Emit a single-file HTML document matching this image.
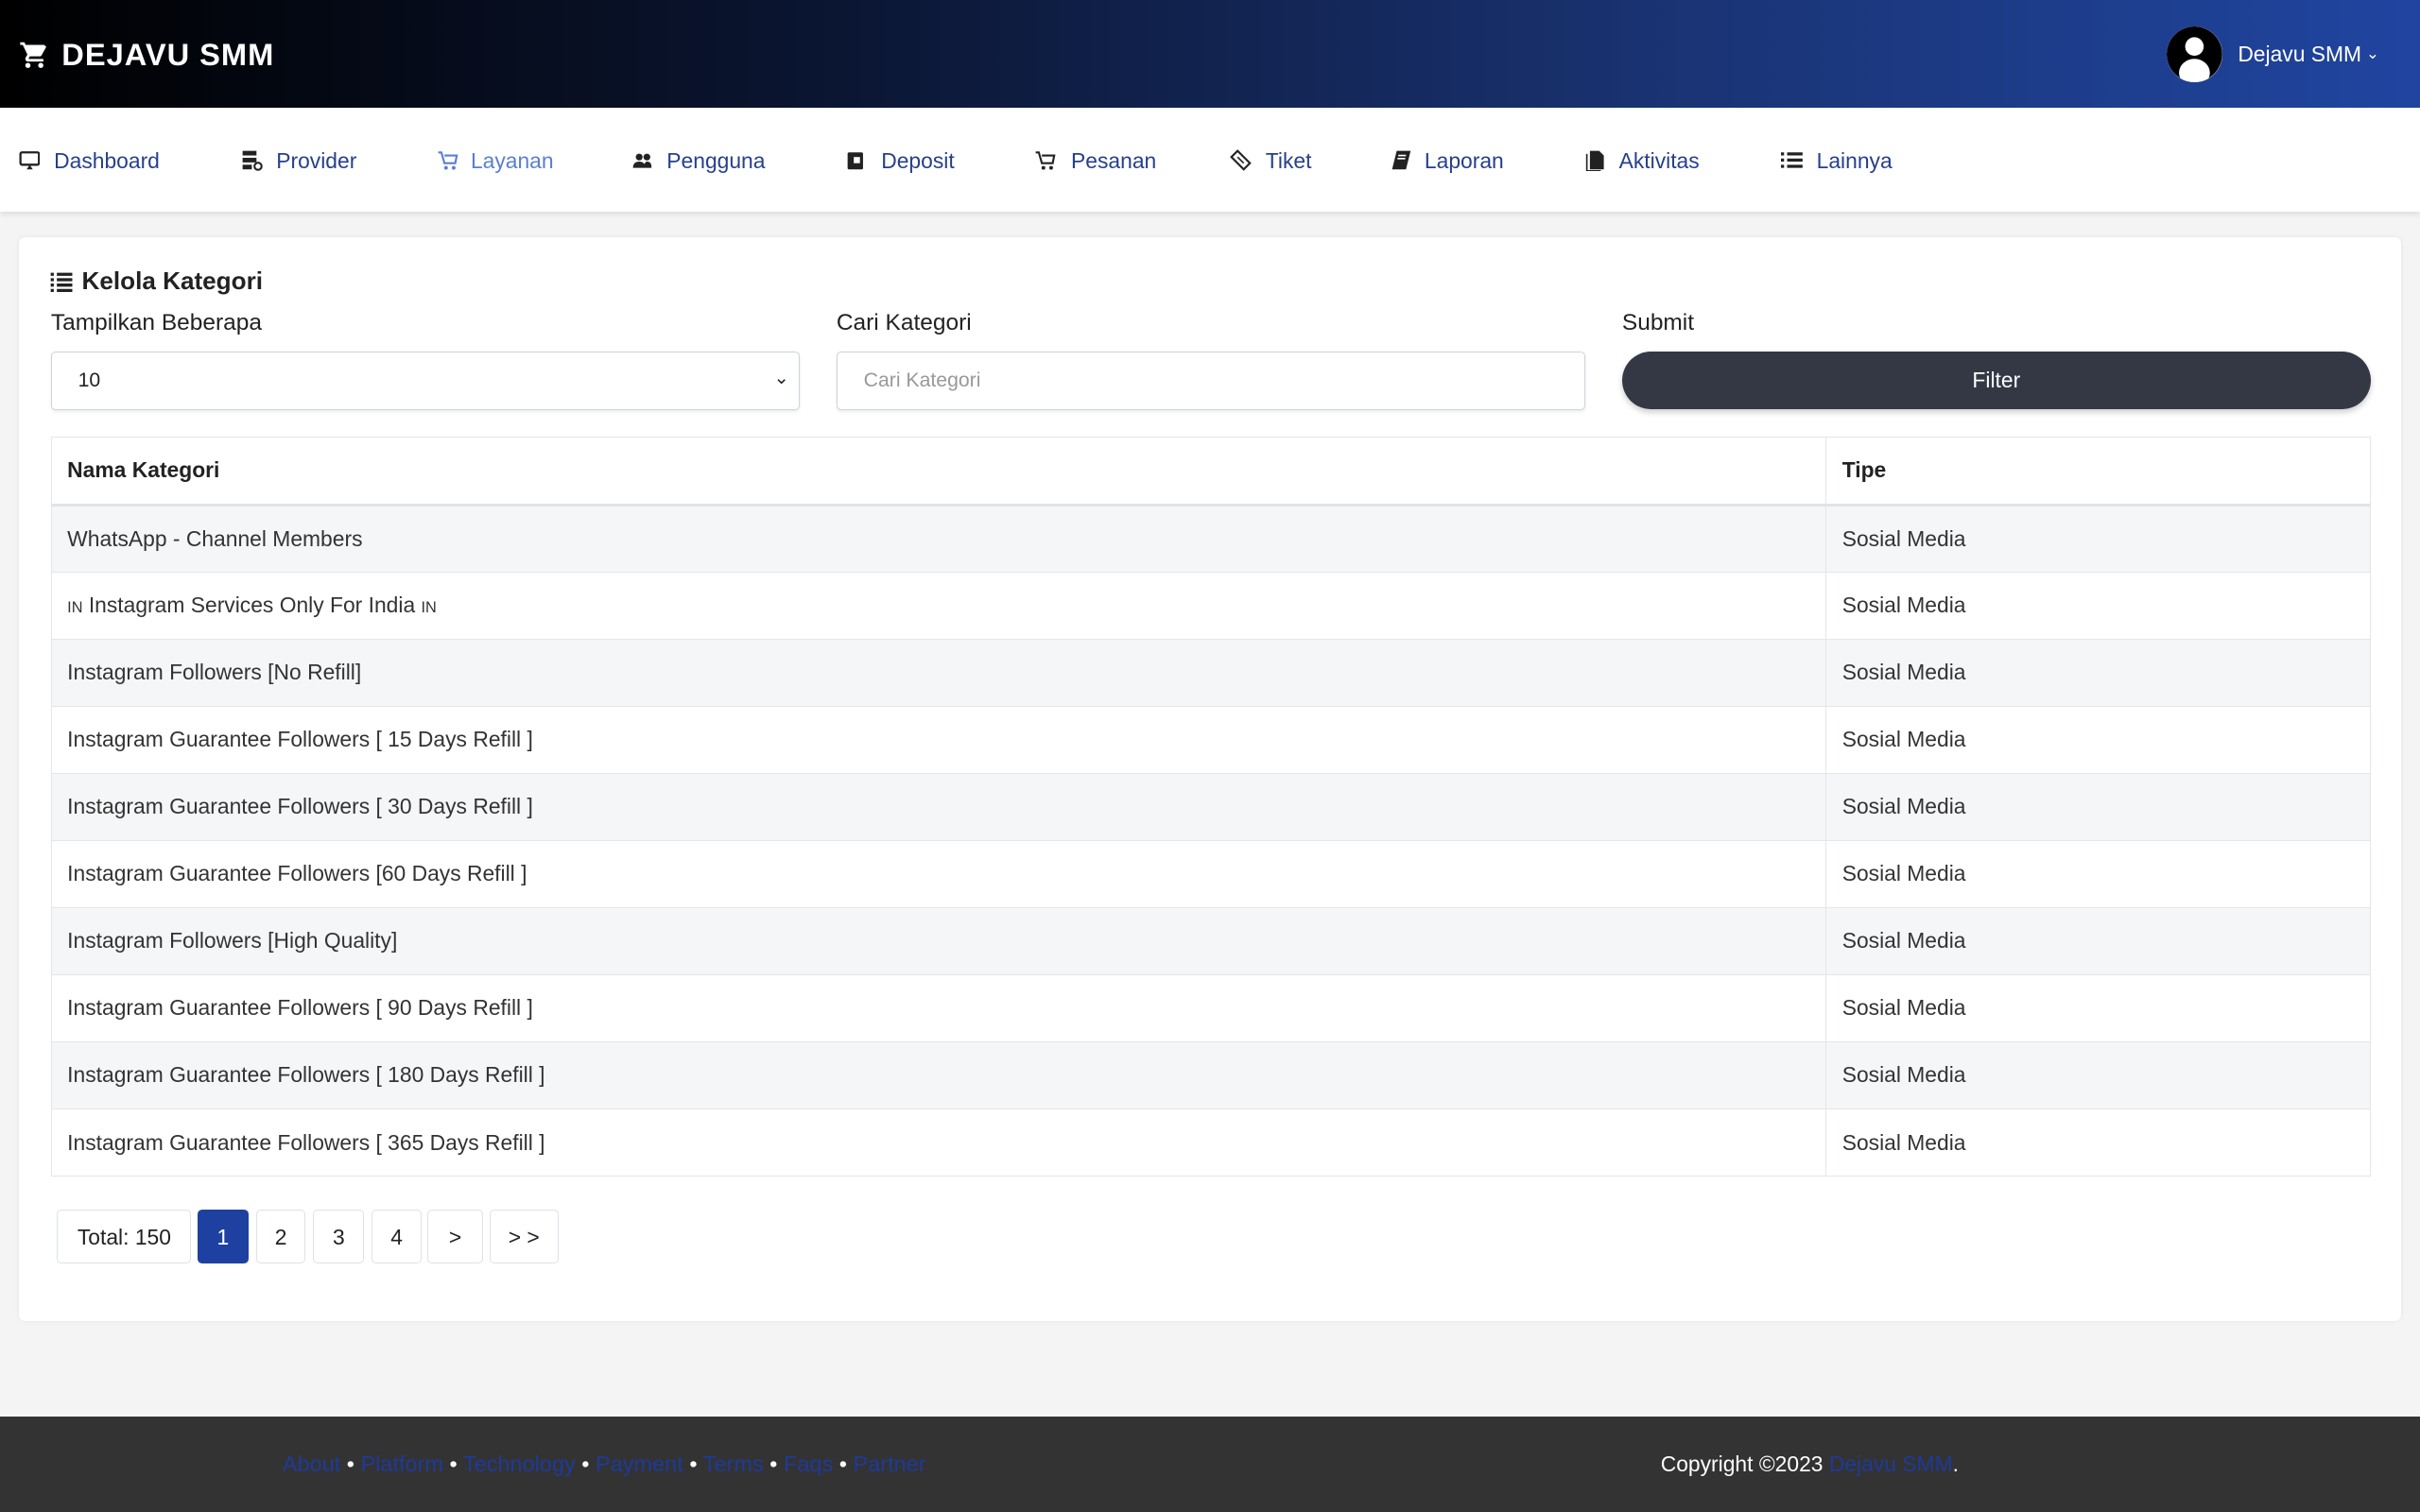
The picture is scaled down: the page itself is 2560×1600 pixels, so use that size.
<!DOCTYPE html>
<html><head><meta charset="utf-8">
<style>
*{box-sizing:border-box;margin:0;padding:0}
html,body{width:2560px;height:1600px;overflow:hidden}
body{background:#f4f4f4;font-family:"Liberation Sans",sans-serif}
#w{zoom:1.63265;width:1568px;height:980px;position:relative;background:#f4f4f4}
.hdr{position:absolute;left:0;top:0;width:1568px;height:70px;background:linear-gradient(90deg,#000 0%,#0b1633 35%,#1a3475 70%,#2045a0 100%)}
.logo{position:absolute;left:12px;top:24px;color:#fff;font-size:20px;font-weight:bold;letter-spacing:0.6px;display:flex;align-items:center;gap:8px}
.user{position:absolute;left:1404px;top:17px;display:flex;align-items:center;color:#fff;font-size:14px}
.av{width:36px;height:36px;border-radius:50%;background:#fff;position:relative;overflow:hidden;margin-right:10px}
.nav{position:absolute;left:0;top:70px;width:1568px;height:67px;background:#fff;box-shadow:0 2px 3px rgba(0,0,0,.08)}
.ni{position:absolute;top:26px;font-size:14px;color:#27408b;display:flex;align-items:center}
.ni svg{position:absolute;left:0;top:1px}
.card{position:absolute;left:12px;top:154px;width:1544px;height:702px;background:#fff;border-radius:4px;box-shadow:0 0 3px rgba(0,0,0,.08)}
.t{position:absolute;font-size:15px;color:#222}
.inp{position:absolute;top:74px;height:38px;border:1px solid #ced4da;border-radius:3px;font-size:13px;padding:11px 17px;color:#222;box-shadow:0 1px 2px rgba(0,0,0,.08)}
.btn{position:absolute;left:1039px;top:74px;width:485px;height:37px;border-radius:19px;background:#333844;color:#fff;font-size:14px;text-align:center;line-height:37px;box-shadow:0 2px 4px rgba(0,0,0,.2)}
table{position:absolute;left:21px;top:129px;width:1503px;border-collapse:collapse;font-size:14px;color:#333}
td,th{border:1px solid #e3e6ea;padding:0 10px;height:43.5px;text-align:left}
th{height:44px;font-weight:bold;color:#222;border-bottom:2px solid #e0e3e7}
tr:nth-child(even) td{background:#f5f6f8}
.pg{position:absolute;top:630px;height:35px;border:1px solid #dee2e6;border-radius:3px;font-size:14px;color:#222;text-align:center;line-height:35px}
.ft{position:absolute;left:0;top:918px;width:1568px;height:62px;background:#333;font-size:14px;color:#fff}
.ft a{color:#1e3a9a;text-decoration:none}
</style></head><body><div id="w">
<div class="hdr">
 <div class="logo"><svg width="20" height="20" viewBox="0 0 24 24"><path fill="#fff" d="M7 18a2 2 0 1 0 0 4a2 2 0 0 0 0-4zM1 2v2h2l3.6 7.6l-1.4 2.4C5.1 14.3 5 14.7 5 15c0 1.1.9 2 2 2h12v-2H7.4l1.1-2h7.5c.8 0 1.4-.4 1.7-1l3.6-6.5L19.6 4H5.2l-.9-2H1zm16 16a2 2 0 1 0 0 4a2 2 0 0 0 0-4z"/></svg>DEJAVU SMM</div>
 <div class="user"><div class="av"><svg width="36" height="36" viewBox="0 0 36 36"><circle cx="18" cy="18" r="18" fill="#000"/><circle cx="18" cy="13" r="6" fill="#fff"/><ellipse cx="18" cy="30" rx="10" ry="9" fill="#fff"/></svg></div>Dejavu SMM <span style="font-size:10px;margin-left:3px">&#8964;</span></div>
</div>
<div class="nav">
 <div class="ni" style="left:12px"><svg width="14" height="14" viewBox="0 0 14 14"><rect x="1" y="2" width="12" height="8" rx="1" fill="none" stroke="#222" stroke-width="1.4"/><path d="M5 13l2-3l2 3z" fill="#222"/></svg><span style="margin-left:23px">Dashboard</span></div>
 <div class="ni" style="left:156px"><svg width="14" height="14" viewBox="0 0 14 14"><rect x="1" y="1" width="9" height="3" fill="#222"/><rect x="1" y="5.5" width="9" height="3" fill="#222"/><rect x="1" y="10" width="6" height="3" fill="#222"/><circle cx="11" cy="11" r="2.3" fill="none" stroke="#222" stroke-width="1.3"/></svg><span style="margin-left:23px">Provider</span></div>
 <div class="ni" style="left:283px;color:#5a7fd0"><svg width="14" height="14" viewBox="0 0 14 14"><path d="M1 2h2l2 7h7l1-5H5" fill="none" stroke="#5a7fd0" stroke-width="1.3"/><circle cx="6" cy="12" r="1.2" fill="#5a7fd0"/><circle cx="11" cy="12" r="1.2" fill="#5a7fd0"/></svg><span style="margin-left:22px">Layanan</span></div>
 <div class="ni" style="left:409px"><svg width="14" height="14" viewBox="0 0 14 14"><circle cx="5" cy="5" r="2.2" fill="#222"/><circle cx="10" cy="5" r="2.2" fill="#222"/><path d="M1 12c0-3 2-4 4-4s4 1 4 4zM8 12c0-2 1-4 2-4c2 0 3 1 3 4z" fill="#222"/></svg><span style="margin-left:23px">Pengguna</span></div>
 <div class="ni" style="left:548px"><svg width="14" height="14" viewBox="0 0 14 14"><rect x="1" y="2" width="10" height="11" rx="1" fill="#222"/><rect x="5" y="5" width="4" height="4" fill="#fff"/></svg><span style="margin-left:23px">Deposit</span></div>
 <div class="ni" style="left:670px"><svg width="14" height="14" viewBox="0 0 14 14"><path d="M1 2h2l2 7h7l1-5H5" fill="none" stroke="#222" stroke-width="1.3"/><circle cx="6" cy="12" r="1.2" fill="#222"/><circle cx="11" cy="12" r="1.2" fill="#222"/></svg><span style="margin-left:24px">Pesanan</span></div>
 <div class="ni" style="left:797px"><svg width="14" height="14" viewBox="0 0 14 14"><path d="M5 1l8 8l-4 4l-8-8z" fill="none" stroke="#222" stroke-width="1.3"/><path d="M5 5l4 4" stroke="#222"/></svg><span style="margin-left:23px">Tiket</span></div>
 <div class="ni" style="left:901px"><svg width="14" height="14" viewBox="0 0 14 14"><path d="M4 1h9l-3 12H1z" fill="#222"/><path d="M5 4h5M4.5 6h5" stroke="#fff"/></svg><span style="margin-left:22px">Laporan</span></div>
 <div class="ni" style="left:1027px"><svg width="14" height="14" viewBox="0 0 14 14"><path d="M3 1h6l3 3v9H3z" fill="#222"/><path d="M1 3v11h9" fill="none" stroke="#222"/></svg><span style="margin-left:22px">Aktivitas</span></div>
 <div class="ni" style="left:1154px"><svg width="14" height="14" viewBox="0 0 14 14"><path d="M0 2h2v2H0zM0 6h2v2H0zM0 10h2v2H0zM4 2h10v2H4zM4 6h10v2H4zM4 10h10v2H4z" fill="#222"/></svg><span style="margin-left:23px">Lainnya</span></div>
</div>
<div class="card">
 <div class="t" style="left:20px;top:19px;font-size:16px;font-weight:bold;display:flex;align-items:center"><svg width="16" height="14" viewBox="0 0 14 14" style="margin-right:5px"><path d="M0 1h2v2H0zM0 4.5h2v2H0zM0 8h2v2H0zM0 11.5h2v2H0zM4 1h10v2H4zM4 4.5h10v2H4zM4 8h10v2H4zM4 11.5h10v2H4z" fill="#222"/></svg>Kelola Kategori</div>
 <div class="t" style="left:21px;top:47px">Tampilkan Beberapa</div>
 <div class="t" style="left:530px;top:47px">Cari Kategori</div>
 <div class="t" style="left:1039px;top:47px">Submit</div>
 <div class="inp" style="left:21px;width:485px">10<span style="position:absolute;right:6px;top:9px;font-size:12px">&#8964;</span></div>
 <div class="inp" style="left:530px;width:485px;color:#999">Cari Kategori</div>
 <div class="btn">Filter</div>
 <table>
  <tr><th style="width:1150px">Nama Kategori</th><th>Tipe</th></tr>
  <tr><td>WhatsApp - Channel Members</td><td>Sosial Media</td></tr>
  <tr><td><span style="font-size:10px">IN</span> Instagram Services Only For India <span style="font-size:10px">IN</span></td><td>Sosial Media</td></tr>
  <tr><td>Instagram Followers [No Refill]</td><td>Sosial Media</td></tr>
  <tr><td>Instagram Guarantee Followers [ 15 Days Refill ]</td><td>Sosial Media</td></tr>
  <tr><td>Instagram Guarantee Followers [ 30 Days Refill ]</td><td>Sosial Media</td></tr>
  <tr><td>Instagram Guarantee Followers [60 Days Refill ]</td><td>Sosial Media</td></tr>
  <tr><td>Instagram Followers [High Quality]</td><td>Sosial Media</td></tr>
  <tr><td>Instagram Guarantee Followers [ 90 Days Refill ]</td><td>Sosial Media</td></tr>
  <tr><td>Instagram Guarantee Followers [ 180 Days Refill ]</td><td>Sosial Media</td></tr>
  <tr><td>Instagram Guarantee Followers [ 365 Days Refill ]</td><td>Sosial Media</td></tr>
 </table>
 <div class="pg" style="left:25px;width:87px">Total: 150</div>
 <div class="pg" style="left:116px;width:33px;background:#1e40a0;border-color:#1e40a0;color:#fff">1</div>
 <div class="pg" style="left:154px;width:32px">2</div>
 <div class="pg" style="left:191px;width:33px">3</div>
 <div class="pg" style="left:229px;width:32px">4</div>
 <div class="pg" style="left:265px;width:36px">&gt;</div>
 <div class="pg" style="left:305px;width:45px">&gt; &gt;</div>
</div>
<div class="ft">
 <div style="position:absolute;left:183px;top:23px;font-size:14.4px"><a>About</a> • <a>Platform</a> • <a>Technology</a> • <a>Payment</a> • <a>Terms</a> • <a>Faqs</a> • <a>Partner</a></div>
 <div style="position:absolute;left:1076px;top:23px">Copyright ©2023 <a>Dejavu SMM</a>.</div>
</div>
</div></body></html>
